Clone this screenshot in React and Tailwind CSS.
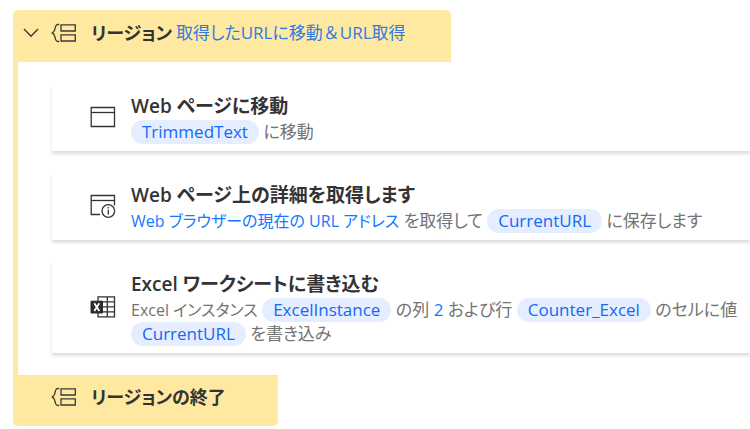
import React, { useState } from 'react';

const RegionIcon = () => (
  <svg viewBox="0 0 26 20" className="h-5 w-[26px] shrink-0" fill="none" stroke="#3b3a33" strokeWidth="1.3" aria-hidden="true">
    <path d="M8.2 1.5H7C5.6 1.5 5 2.3 4.6 3.4L3.6 7.2C3.2 8.7 2.4 9.7.8 10C2.4 10.3 3.2 11.3 3.6 12.8L4.6 16.6C5 17.7 5.6 18.5 7 18.5H8.2" />
    <path d="M10 1.8H24.3V8H10Z" />
    <path d="M10 11.8H24.3V18H10Z" />
  </svg>
);

const WindowIcon = () => (
  <svg viewBox="0 0 26 22" className="h-[22px] w-[26px]" fill="none" stroke="#333" strokeWidth="1.3" aria-hidden="true">
    <path d="M1.2 1.5H24.5V20.5H1.2Z" />
    <path d="M1.2 6.5H24.5" />
  </svg>
);

const WindowInfoIcon = () => (
  <svg viewBox="0 0 26 24" className="h-6 w-[26px]" fill="none" stroke="#333" strokeWidth="1.3" aria-hidden="true">
    <path d="M10 20.5H1.2V1.5H24.5V11.5" />
    <path d="M1.2 6.5H24.5" />
    <circle cx="18.3" cy="17" r="6.3" />
    <path d="M18.3 15.8V20.5" />
    <path d="M18.3 13V14.5" />
  </svg>
);

const ExcelIcon = () => (
  <svg viewBox="0 0 26 22" className="h-[22px] w-[26px]" fill="none" stroke="#333" strokeWidth="1.3" aria-hidden="true">
    <path d="M8 .9H24.5V20.9H8Z" />
    <path d="M8 5.9H24.5M8 10.9H24.5M8 15.9H24.5M17.3 .9V20.9" />
    <path d="M1 5.2H12.5V17H1Z" fill="#2b2b2b" stroke="#2b2b2b" strokeWidth="1" />
    <path d="M4.3 7.3L9.3 15M9.3 7.3L4.3 15" stroke="#fff" strokeWidth="1.8" />
  </svg>
);

const Variable = ({ children }) => (
  <span className="inline-block h-6 rounded-full bg-[#e5eefe] px-[11px] align-top whitespace-nowrap text-[#1668f5]">
    {children}
  </span>
);

const Action = ({ icon, title, children }) => (
  <li className="flex items-center gap-[15px] bg-white pl-[38px] shadow-[0_3px_3px_rgba(0,0,0,0.13)]">
    <div className="shrink-0">{icon}</div>
    <div className="min-w-0 flex-1 pt-[10px] pb-[7px]">
      <h2 className="text-[19px] leading-[27px] font-semibold text-[#333]">{title}</h2>
      <p className="text-[17px] leading-6 text-[#737373]">{children}</p>
    </div>
  </li>
);

const App = () => {
  const [open, setOpen] = useState(true);

  return (
    <main className="overflow-hidden bg-white pt-[10px] pl-[13px] font-['Open_Sans','Noto_Sans_CJK_JP',sans-serif] [font-feature-settings:'palt']">
      {/* Region start */}
      <header className="flex h-[52px] w-fit items-center rounded-t-[5px] bg-[#ffe9a1] pr-[45px] pb-[7px] pl-2">
        <button
          type="button"
          aria-label="リージョン"
          aria-expanded={open}
          onClick={() => setOpen(!open)}
          className="mr-[10px] flex h-5 w-5 items-center justify-center"
        >
          <svg viewBox="0 0 18 12" className="h-3 w-[18px]" fill="none" stroke="#3b3a33" strokeWidth="1.4">
            <path d="M2 2L9 9.3L16 2" />
          </svg>
        </button>
        <RegionIcon />
        <h1 className="ml-[14px] text-[18px] leading-7 font-semibold text-[#333]">リージョン</h1>
        <span className="ml-1 text-[17px] leading-7 text-[#2e7be6]">
          取得したURLに移動<span className="[font-feature-settings:normal]">＆</span>URL取得
        </span>
      </header>

      {/* Actions in the region */}
      {open && (
        <ul className="flex flex-col gap-[21px] border-l-[5px] border-[#ffe9a1] pt-[21px] pb-[22px] pl-[34px]">
          <Action icon={<WindowIcon />} title="Web ページに移動">
            <Variable>TrimmedText</Variable> に移動
          </Action>
          <Action icon={<WindowInfoIcon />} title="Web ページ上の詳細を取得します">
            <span className="text-[16px] text-[#1677ff]">Web ブラウザーの現在の URL アドレス</span> を取得して{' '}
            <Variable>CurrentURL</Variable> に保存します
          </Action>
          <Action icon={<ExcelIcon />} title="Excel ワークシートに書き込む">
            <span className="text-[16px]">Excel インスタンス</span> <Variable>ExcelInstance</Variable> の列{' '}
            <span className="text-[#1677ff]">2</span> および行 <Variable>Counter_Excel</Variable> のセルに値{' '}
            <Variable>CurrentURL</Variable> を書き込み
          </Action>
        </ul>
      )}

      {/* Region end */}
      <footer className="flex h-[51px] w-fit items-center rounded-b-[5px] bg-[#ffe9a1] pr-[52px] pb-[7px] pl-[38px]">
        <RegionIcon />
        <h2 className="ml-[14px] text-[18px] leading-7 font-semibold text-[#333]">リージョンの終了</h2>
      </footer>
    </main>
  );
};

export default App;
